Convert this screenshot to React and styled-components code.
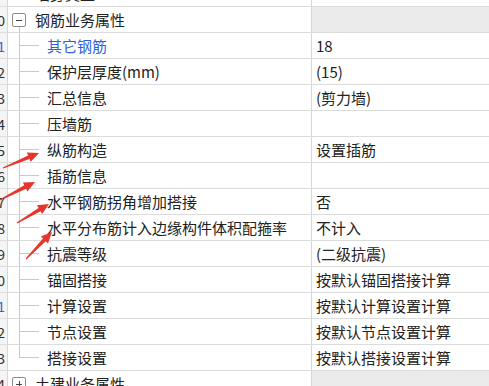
import React from "react";
import styled, { createGlobalStyle } from "styled-components";

const GlobalStyle = createGlobalStyle`
  html, body {
    margin: 0;
    padding: 0;
    background: #ffffff;
  }
  body {
    font-family: "Noto Sans CJK SC", "Noto Sans", sans-serif;
  }
`;

const Page = styled.div`
  position: relative;
  width: 489px;
  height: 386px;
  overflow: hidden;
  background: #ffffff;
`;

const Grid = styled.div`
  display: flex;
  flex-direction: column;
  margin-top: -19px;
`;

const Row = styled.div`
  display: grid;
  grid-template-columns: 8px 304px 1fr;
  height: 26px;
  box-sizing: border-box;
  border-bottom: 1px solid #dcdcdc;
  font-size: 15px;
  color: #222222;
`;

const Num = styled.div`
  display: flex;
  align-items: center;
  justify-content: flex-end;
  overflow: hidden;
  padding-right: 2px;
  background: #f4f4f4;
  border-right: 1px solid #d6d6d6;
  font-size: 14px;
  color: ${(p) => (p.$blue ? "#3462d8" : "#333333")};
  white-space: nowrap;
`;

const TreeCell = styled.div`
  display: flex;
  align-items: center;
  border-right: 1px solid #d6d6d6;
  overflow: hidden;
  white-space: nowrap;
`;

const Gutter = styled.span`
  flex: none;
  align-self: stretch;
  width: 27px;
  display: flex;
  align-items: center;
  justify-content: flex-start;
  padding-left: 4px;
  box-sizing: border-box;
  background-image: ${(p) =>
    p.$line ? "linear-gradient(#c9c9c9, #c9c9c9)" : "none"};
  background-repeat: no-repeat;
  background-size: 1px 50%;
  background-position: 11px 100%;
`;

const Toggle = styled.span`
  position: relative;
  width: 14px;
  height: 14px;
  box-sizing: border-box;
  border: 1px solid #8c8c8c;
  border-radius: 2px;
  background: #ffffff;
  display: flex;
  align-items: center;
  justify-content: center;
  margin-top: 1px;

  &::before {
    content: "";
    width: 6px;
    height: 1px;
    background: #444444;
  }

  &::after {
    content: "";
    position: absolute;
    width: 1px;
    height: 6px;
    background: #444444;
    display: ${(p) => (p.$closed ? "block" : "none")};
  }
`;

const Branch = styled.span`
  flex: none;
  align-self: stretch;
  width: 39px;
  background-image: linear-gradient(#c9c9c9, #c9c9c9),
    linear-gradient(#c9c9c9, #c9c9c9);
  background-repeat: no-repeat;
  background-size: 1px ${(p) => (p.$last ? "50%" : "calc(100% + 1px)")},
    20px 1px;
  background-position: 11px 0, 11px 50%;
`;

const Label = styled.span`
  color: ${(p) => (p.$active ? "#2f5fe3" : "#222222")};
`;

const Value = styled.div`
  display: flex;
  align-items: center;
  padding-left: 4px;
  white-space: nowrap;
  overflow: hidden;
  background: ${(p) => (p.$group ? "#ebebeb" : "#ffffff")};
`;

const Overlay = styled.svg`
  position: absolute;
  left: 0;
  top: 0;
  width: 489px;
  height: 386px;
  pointer-events: none;
`;

const children = [
  { n: 11, label: "其它钢筋", value: "18", active: true },
  { n: 12, label: "保护层厚度(mm)", value: "(15)" },
  { n: 13, label: "汇总信息", value: "(剪力墙)" },
  { n: 14, label: "压墙筋", value: "" },
  { n: 15, label: "纵筋构造", value: "设置插筋" },
  { n: 16, label: "插筋信息", value: "" },
  { n: 17, label: "水平钢筋拐角增加搭接", value: "否" },
  { n: 18, label: "水平分布筋计入边缘构件体积配箍率", value: "不计入" },
  { n: 19, label: "抗震等级", value: "(二级抗震)" },
  { n: 20, label: "锚固搭接", value: "按默认锚固搭接计算" },
  { n: 21, label: "计算设置", value: "按默认计算设置计算" },
  { n: 22, label: "节点设置", value: "按默认节点设置计算" },
  { n: 23, label: "搭接设置", value: "按默认搭接设置计算" },
];

// annotation arrows: tail x,y -> tip x,y
const arrows = [
  [3, 168, 39, 153],
  [0, 200, 35, 182],
  [17, 223, 49, 204],
  [26, 259, 52, 232],
];

function arrowPoints([x1, y1, x2, y2]) {
  const dx = x2 - x1;
  const dy = y2 - y1;
  const len = Math.hypot(dx, dy);
  const ux = dx / len;
  const uy = dy / len;
  const nx = -uy;
  const ny = ux;
  const head = 11;
  const bx = x2 - ux * head;
  const by = y2 - uy * head;
  const pts = [
    [x1 + nx * 0.6, y1 + ny * 0.6],
    [bx + nx * 1.9, by + ny * 1.9],
    [bx + nx * 5, by + ny * 5],
    [x2, y2],
    [bx - nx * 5, by - ny * 5],
    [bx - nx * 1.9, by - ny * 1.9],
    [x1 - nx * 0.6, y1 - ny * 0.6],
  ];
  return pts.map((p) => p.map((v) => v.toFixed(1)).join(",")).join(" ");
}

export default function App() {
  return (
    <Page>
      <GlobalStyle />
      <Grid>
        <Row>
          <Num>9</Num>
          <TreeCell>
            <Gutter />
            <Label>墙身类型</Label>
          </TreeCell>
          <Value />
        </Row>
        <Row>
          <Num>10</Num>
          <TreeCell>
            <Gutter $line>
              <Toggle />
            </Gutter>
            <Label>钢筋业务属性</Label>
          </TreeCell>
          <Value $group />
        </Row>
        {children.map((c, i) => (
          <Row key={c.n}>
            <Num $blue={c.n % 10 === 1}>{c.n}</Num>
            <TreeCell>
              <Branch $last={i === children.length - 1} />
              <Label $active={c.active}>{c.label}</Label>
            </TreeCell>
            <Value>{c.value}</Value>
          </Row>
        ))}
        <Row>
          <Num>24</Num>
          <TreeCell>
            <Gutter>
              <Toggle $closed />
            </Gutter>
            <Label>土建业务属性</Label>
          </TreeCell>
          <Value $group />
        </Row>
      </Grid>
      <Overlay viewBox="0 0 489 386">
        {arrows.map((a, i) => (
          <polygon key={i} points={arrowPoints(a)} fill="#e8352b" />
        ))}
      </Overlay>
    </Page>
  );
}
